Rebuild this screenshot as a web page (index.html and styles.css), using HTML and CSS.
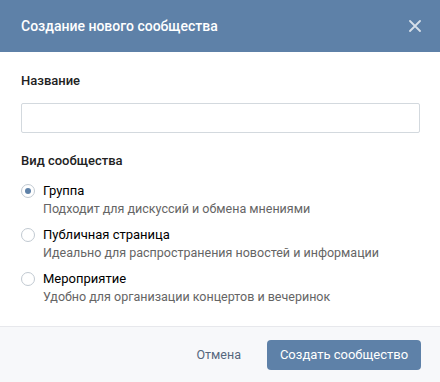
FILE: index.html
```html
<!DOCTYPE html>
<html lang="ru">
<head>
<meta charset="utf-8">
<link rel="stylesheet" href="styles.css">
</head>
<body>
<div class="box">
  <div class="box-head">
    <div class="box-title">Создание нового сообщества</div>
    <div class="box-close">
      <svg width="12" height="12" viewBox="0 0 12 12"><path d="M1 1L11 11M11 1L1 11" stroke="#fff" stroke-width="1.8" stroke-linecap="round"/></svg>
    </div>
  </div>
  <div class="box-body">
    <div class="label">Название</div>
    <input class="text-input" type="text">
    <div class="label label-type">Вид сообщества</div>
    <div class="radios">
      <div class="radio-row">
        <span class="radio on"></span>
        <div class="radio-text">
          <div class="radio-title">Группа</div>
          <div class="radio-desc">Подходит для дискуссий и обмена мнениями</div>
        </div>
      </div>
      <div class="radio-row">
        <span class="radio"></span>
        <div class="radio-text">
          <div class="radio-title">Публичная страница</div>
          <div class="radio-desc">Идеально для распространения новостей и информации</div>
        </div>
      </div>
      <div class="radio-row">
        <span class="radio"></span>
        <div class="radio-text">
          <div class="radio-title">Мероприятие</div>
          <div class="radio-desc">Удобно для организации концертов и вечеринок</div>
        </div>
      </div>
    </div>
  </div>
  <div class="box-foot">
    <button class="btn btn-cancel">Отмена</button>
    <button class="btn btn-primary">Создать сообщество</button>
  </div>
</div>
</body>
</html>
```
FILE: styles.css
```css
* { box-sizing: border-box; }
html, body { margin: 0; padding: 0; background: #fff; }
body {
  font-family: Roboto, "Open Sans", "DejaVu Sans", sans-serif;
  font-size: 13px;
  color: #000;
  width: 440px;
  height: 382px;
  overflow: hidden;
}
.box { display: flex; flex-direction: column; height: 382px; }
.box-head {
  height: 52px;
  background: #5e81a8;
  display: flex;
  align-items: center;
  justify-content: space-between;
  padding: 0 19px 0 21px;
}
.box-title { color: #fff; font-size: 14px; font-weight: 500; }
.box-close { width: 12px; height: 12px; display: flex; opacity: 0.75; }
.box-body { padding: 20px 20px 0 21px; flex: 1; }
.label { font-size: 13px; font-weight: 500; color: #222; line-height: 16px; margin-top: 1px; }
.text-input {
  display: block;
  width: 399px;
  height: 30px;
  margin-top: 14px;
  border: 1px solid #d3d9de;
  border-radius: 2px;
  background: #fff;
  outline: none;
}
.label-type { margin-top: 20px; }
.radios { margin-top: 13px; display: flex; flex-direction: column; gap: 8px; }
.radio-row { display: flex; gap: 8px; }
.radio {
  width: 14px; height: 14px;
  border: 1px solid #c1c9d1;
  border-radius: 50%;
  margin-top: 2px;
  flex: none;
  position: relative;
}
.radio.on::after {
  content: "";
  position: absolute;
  left: 3px; top: 3px;
  width: 6px; height: 6px;
  border-radius: 50%;
  background: #5e81a8;
}
.radio-title { font-size: 13px; line-height: 18px; color: #000; }
.radio-desc { font-size: 12.5px; line-height: 18px; color: #656565; }
.box-foot {
  height: 56px;
  border-top: 1px solid #e7e8ec;
  background: #f7f8fa;
  display: flex;
  align-items: center;
  justify-content: flex-end;
  padding: 0 19px 0 0;
  gap: 8px;
}
.btn {
  font-family: inherit;
  font-size: 13px;
  height: 30px;
  border: none;
  border-radius: 4px;
  padding: 0 16px;
  cursor: pointer;
  white-space: nowrap;
}
.btn-cancel { background: transparent; color: #55677d; margin-right: 2px; font-size: 12.5px; }
.btn-primary { background: #5e81a8; color: #fff; width: 154px; padding: 0; }
```
